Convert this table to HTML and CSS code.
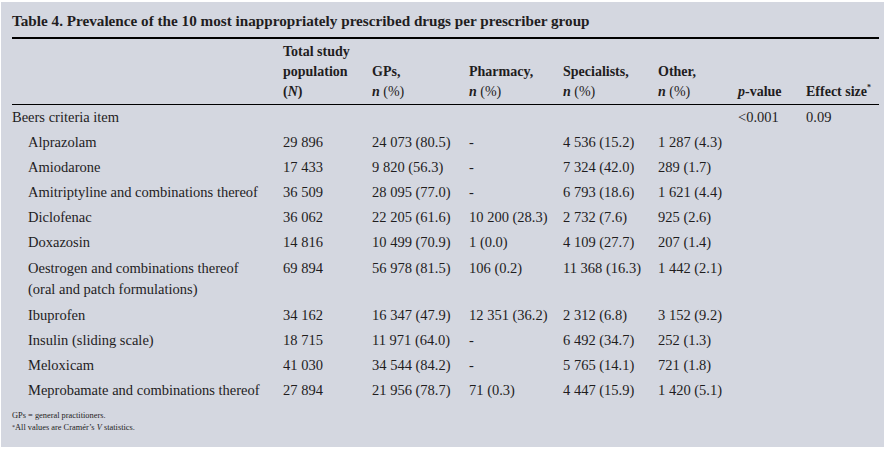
FILE: index.html
```html
<!DOCTYPE html>
<html lang="en">
<head>
<meta charset="utf-8">
<title>Table 4</title>
<link rel="stylesheet" href="styles.css">
</head>
<body>
<div class="page">
  <div class="title">Table 4. Prevalence of the 10 most inappropriately prescribed drugs per prescriber group</div>
  <table class="data">
    <colgroup>
      <col class="c-label">
      <col class="c-total">
      <col class="c-gp">
      <col class="c-ph">
      <col class="c-sp">
      <col class="c-ot">
      <col class="c-p">
      <col class="c-es">
    </colgroup>
    <thead>
      <tr>
        <th></th>
        <th>Total study<br>population<br>(<i>N</i>)</th>
        <th>GPs,<br><i>n</i> <span class="pct">(%)</span></th>
        <th>Pharmacy,<br><i>n</i> <span class="pct">(%)</span></th>
        <th>Specialists,<br><i>n</i> <span class="pct">(%)</span></th>
        <th>Other,<br><i>n</i> <span class="pct">(%)</span></th>
        <th><i>p</i>-value</th>
        <th>Effect size<sup class="ast">*</sup></th>
      </tr>
    </thead>
    <tbody>
      <tr><td>Beers criteria item</td><td></td><td></td><td></td><td></td><td></td><td>&lt;0.001</td><td>0.09</td></tr>
      <tr><td class="ind">Alprazolam</td><td>29 896</td><td>24 073 (80.5)</td><td>-</td><td>4 536 (15.2)</td><td>1 287 (4.3)</td><td></td><td></td></tr>
      <tr><td class="ind">Amiodarone</td><td>17 433</td><td>9 820 (56.3)</td><td>-</td><td>7 324 (42.0)</td><td>289 (1.7)</td><td></td><td></td></tr>
      <tr><td class="ind">Amitriptyline and combinations thereof</td><td>36 509</td><td>28 095 (77.0)</td><td>-</td><td>6 793 (18.6)</td><td>1 621 (4.4)</td><td></td><td></td></tr>
      <tr><td class="ind">Diclofenac</td><td>36 062</td><td>22 205 (61.6)</td><td>10 200 (28.3)</td><td>2 732 (7.6)</td><td>925 (2.6)</td><td></td><td></td></tr>
      <tr><td class="ind">Doxazosin</td><td>14 816</td><td>10 499 (70.9)</td><td>1 (0.0)</td><td>4 109 (27.7)</td><td>207 (1.4)</td><td></td><td></td></tr>
      <tr class="two"><td class="ind">Oestrogen and combinations thereof<br>(oral and patch formulations)</td><td>69 894</td><td>56 978 (81.5)</td><td>106 (0.2)</td><td>11 368 (16.3)</td><td>1 442 (2.1)</td><td></td><td></td></tr>
      <tr><td class="ind">Ibuprofen</td><td>34 162</td><td>16 347 (47.9)</td><td>12 351 (36.2)</td><td>2 312 (6.8)</td><td>3 152 (9.2)</td><td></td><td></td></tr>
      <tr><td class="ind">Insulin (sliding scale)</td><td>18 715</td><td>11 971 (64.0)</td><td>-</td><td>6 492 (34.7)</td><td>252 (1.3)</td><td></td><td></td></tr>
      <tr><td class="ind">Meloxicam</td><td>41 030</td><td>34 544 (84.2)</td><td>-</td><td>5 765 (14.1)</td><td>721 (1.8)</td><td></td><td></td></tr>
      <tr><td class="ind">Meprobamate and combinations thereof</td><td>27 894</td><td>21 956 (78.7)</td><td>71 (0.3)</td><td>4 447 (15.9)</td><td>1 420 (5.1)</td><td></td><td></td></tr>
    </tbody>
  </table>
  <div class="notes">
    <div>GPs = general practitioners.</div>
    <div><span class="ast2">*</span>All values are Cramér’s <i>V</i> statistics.</div>
  </div>
</div>
</body>
</html>
```
FILE: styles.css
```css
html, body {
  margin: 0;
  padding: 0;
  background: #ffffff;
}
body {
  font-family: "Liberation Serif", "Times New Roman", serif;
  color: #1f1d1e;
}
.page {
  margin: 2px 1px 2px 1px;
  height: 445px;
  background: #d4d7e0;
  padding: 10px 6px 0 11px;
  box-sizing: border-box;
}
.title {
  font-size: 15.2px;
  line-height: 18px;
  font-weight: bold;
  padding-bottom: 7px;
  border-bottom: 2px solid #000;
  width: 867px;
}
.data {
  border-collapse: collapse;
  table-layout: fixed;
  width: 867px;
  font-size: 14.5px;
}
.c-label { width: 271px; }
.c-total { width: 89px; }
.c-gp { width: 97px; }
.c-ph { width: 94px; }
.c-sp { width: 95px; }
.c-ot { width: 80px; }
.c-p { width: 68px; }
.c-es { width: 73px; }
.data th {
  font-size: 14px;
  font-weight: bold;
  text-align: left;
  vertical-align: bottom;
  line-height: 20px;
  padding: 3px 0 2px 0;
  border-bottom: 1px solid #000;
  white-space: nowrap;
}
.data th i { font-weight: bold; }
.pct { font-weight: normal; }
.ast {
  font-size: 8px;
  vertical-align: top;
  line-height: 1;
  position: relative;
  top: 2px;
}
.data td {
  text-align: left;
  vertical-align: top;
  line-height: 21px;
  padding: 2px 0;
  white-space: nowrap;
}
.data tr.two td {
  padding-top: 3px;
  padding-bottom: 3px;
}
.data td.ind { padding-left: 16px; }
.notes {
  font-size: 8.4px;
  line-height: 12px;
  padding-top: 7px;
}
.ast2 {
  font-size: 6px;
  vertical-align: top;
  line-height: 10px;
}
```
